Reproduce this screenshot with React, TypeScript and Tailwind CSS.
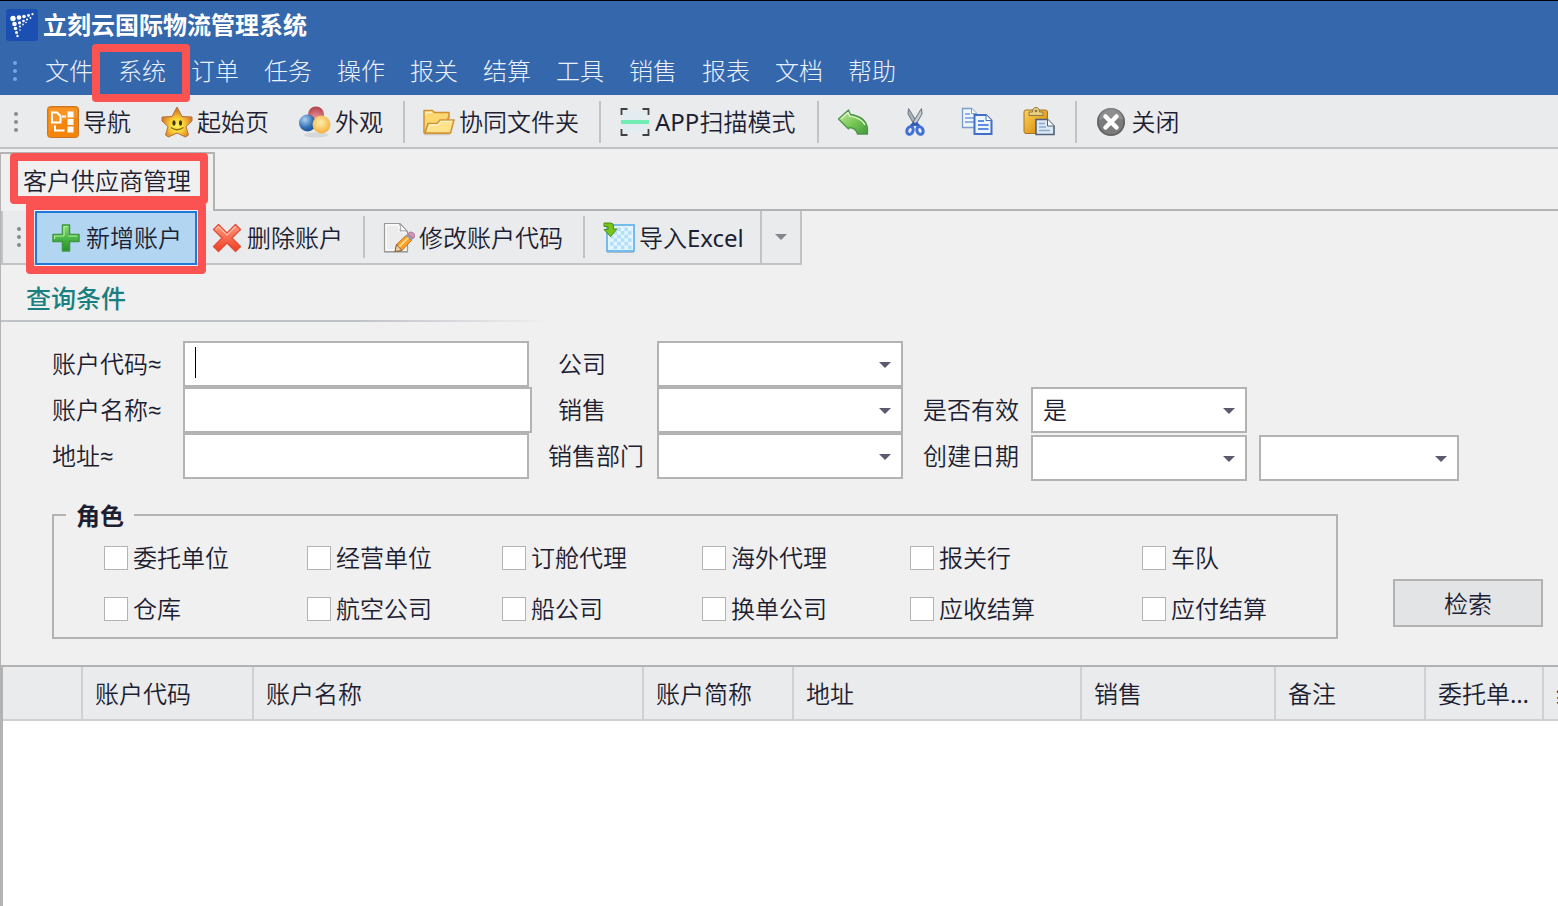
import type { ReactNode } from "react";

const menuItems = ["文件", "系统", "订单", "任务", "操作", "报关", "结算", "工具", "销售", "报表", "文档", "帮助"];

const roles = [
	"委托单位", "经营单位", "订舱代理", "海外代理", "报关行", "车队",
	"仓库", "航空公司", "船公司", "换单公司", "应收结算", "应付结算",
];

const columns = [
	{ label: "", width: "w-[79px]" },
	{ label: "账户代码", width: "w-[171px]" },
	{ label: "账户名称", width: "w-[390px]" },
	{ label: "账户简称", width: "w-[150px]" },
	{ label: "地址", width: "w-[288px]" },
	{ label: "销售", width: "w-[194px]" },
	{ label: "备注", width: "w-[150px]" },
	{ label: "委托单位", width: "w-[118px]" },
	{ label: "经营单位", width: "w-[118px]" },
];

function Logo() {
	return (
		<svg viewBox="0 0 32 32" className="h-8 w-8" fill="#fff">
			<rect width="32" height="32" rx="3" fill="#1c4fb2" />
			<circle cx="7" cy="9.500" r="2.700" />
			<circle cx="13" cy="8.500" r="2.300" />
			<circle cx="18" cy="7.500" r="1.800" />
			<circle cx="22.500" cy="6.500" r="1.400" />
			<circle cx="26.500" cy="5.200" r="1.100" />
			<circle cx="8.500" cy="15" r="2.300" />
			<circle cx="13.500" cy="13.800" r="1.600" />
			<circle cx="17.500" cy="12" r="1.300" />
			<circle cx="21" cy="10.500" r="1.100" />
			<circle cx="24.500" cy="9" r=".9" />
			<circle cx="9.500" cy="19.500" r="1.800" />
			<circle cx="14" cy="17.500" r="1.100" />
			<circle cx="17" cy="15.500" r=".9" />
			<circle cx="20" cy="13.500" r=".8" />
			<circle cx="10.500" cy="23.500" r="1.500" />
			<circle cx="14" cy="21" r=".8" />
			<circle cx="11.500" cy="27" r="1.200" />
		</svg>
	);
}

function NavIcon() {
	return (
		<svg viewBox="0 0 32 32" className="h-8 w-8">
			<rect x=".5" y=".5" width="31" height="31" rx="3" fill="#f5850a" stroke="#c9772a" />
			<path d="M2 26V4q0-2 2-2h24q2 0 2 2v8Q14 12 2 26z" fill="#fba94a" opacity=".4" />
			<g fill="none" stroke="#fff" strokeWidth="2">
				<path d="M5 6.500h5l3.500 3.500v6.500H5zM8 19.500v5h9.500M15 10.500h4" />
				<path d="M21.500 6.500h4v4h-4zM21.500 14h4v4h-4zM21.500 21.500h4v4h-4z" fill="#fff" />
			</g>
		</svg>
	);
}

function StarIcon() {
	return (
		<svg viewBox="0 0 32 32" className="h-8 w-8">
			<defs>
				<radialGradient id="star" cx=".5" cy=".62" r=".5">
					<stop offset="0" stopColor="#fff45c" />
					<stop offset=".45" stopColor="#fbd437" />
					<stop offset="1" stopColor="#d97f2b" />
				</radialGradient>
			</defs>
			<path d="M16 1l5 9.500L31 11v4l-6 5.500 2.500 8.500-3 2-8.500-4-8.500 4-3-2L7 20.500 1 15v-4l10-.5z" fill="url(#star)" stroke="#b5713a" strokeLinejoin="round" />
			<ellipse cx="13" cy="17" rx="1.600" ry="2.700" fill="#3a3212" />
			<ellipse cx="19.500" cy="17" rx="1.600" ry="2.700" fill="#3a3212" />
			<path d="M10 21.500q6 4.500 12.500 0" fill="none" stroke="#8c6a17" strokeWidth="1.300" />
		</svg>
	);
}

function SkinIcon() {
	return (
		<svg viewBox="0 0 32 32" className="h-8 w-8">
			<defs>
				<radialGradient id="red" cx=".5" cy=".8" r=".8">
					<stop offset="0" stopColor="#f3a1a1" />
					<stop offset="1" stopColor="#b0404a" />
				</radialGradient>
				<radialGradient id="blue" cx=".35" cy=".3" r=".8">
					<stop offset="0" stopColor="#aed1f2" />
					<stop offset=".6" stopColor="#336fb3" />
					<stop offset="1" stopColor="#194b8c" />
				</radialGradient>
				<radialGradient id="gold" cx=".45" cy=".4" r=".7">
					<stop offset="0" stopColor="#ffefad" />
					<stop offset="1" stopColor="#f2a52b" />
				</radialGradient>
			</defs>
			<ellipse cx="17" cy="29" rx="12" ry="2.500" fill="#d6d7d8" />
			<circle cx="17" cy="8.500" r="8" fill="url(#red)" />
			<circle cx="8.500" cy="17" r="8.500" fill="url(#blue)" />
			<circle cx="22.500" cy="18.500" r="9" fill="url(#gold)" />
		</svg>
	);
}

function FolderIcon() {
	return (
		<svg viewBox="0 0 32 32" className="h-8 w-8">
			<path d="M1 28.500h26" stroke="#cfcac0" strokeWidth="1.500" />
			<path d="M1 27V4.500h8.500l2 2H26V12h-1v15z" fill="#fbd671" stroke="#cf9135" strokeWidth="1.500" strokeLinejoin="round" />
			<path d="M2 27l3-9.500h9l3-3.500H31l-3.500 13z" fill="#fde28a" stroke="#cf9135" strokeWidth="1.500" strokeLinejoin="round" />
			<path d="M5 24l2-5h8l3-3.500h11M3 9V6.500h6" fill="none" stroke="#fff3c4" strokeWidth="1.300" />
		</svg>
	);
}

function ScanIcon() {
	return (
		<svg viewBox="0 0 32 32" className="h-8 w-8">
			<rect x="5" y="5" width="22" height="22" fill="#e0ecf3" opacity=".7" />
			<path d="M2.500 9V3h6M23.500 3h6v6M2.500 23V29h6M23.500 29h6v-6" fill="none" stroke="#3d4144" strokeWidth="1.800" />
			<path d="M2 16h28" stroke="#72edb6" strokeWidth="4" />
		</svg>
	);
}

function UndoIcon() {
	return (
		<svg viewBox="0 0 32 32" className="h-8 w-8">
			<defs>
				<linearGradient id="undo" x1="0" y1="0" x2="1" y2="1">
					<stop offset="0" stopColor="#c8ecaa" />
					<stop offset=".5" stopColor="#7cc957" />
					<stop offset="1" stopColor="#3e9b3a" />
				</linearGradient>
			</defs>
			<path d="M1.500 13L11.500 4l2 4.500q16 2.500 17 14.500v5h-10q-1.500-6-8-6.500L11.500 23z" fill="url(#undo)" stroke="#4d944c" strokeWidth="1.300" strokeLinejoin="round" />
			<path d="M4 13l7-6.500 1.500 3.500q12 2 15.500 9" fill="none" stroke="#e2f7cf" strokeWidth="1.200" />
		</svg>
	);
}

function CutIcon() {
	return (
		<svg viewBox="0 0 32 32" className="h-8 w-8">
			<path d="M9.500 2.500l9 14.500-2.500 3L9 8z" fill="#a9b2bd" stroke="#69737f" strokeWidth="1" />
			<path d="M22.500 2.500L13.500 17l2.500 3L23 8z" fill="#c4cbd3" stroke="#69737f" strokeWidth="1" />
			<path d="M15.800 17l-4 3.500M16.200 17l4 3.500" stroke="#315cba" strokeWidth="3.500" />
			<g fill="#e9ebec" stroke="#3f70d8" strokeWidth="3">
				<ellipse cx="11" cy="24.500" rx="3" ry="4" transform="rotate(25 11 24.500)" />
				<ellipse cx="21" cy="24.500" rx="3" ry="4" transform="rotate(-25 21 24.500)" />
			</g>
		</svg>
	);
}

function CopyIcon() {
	return (
		<svg viewBox="0 0 32 32" className="h-8 w-8">
			<path d="M1.500 2.500h9l5 5v14h-14z" fill="#edf5fe" stroke="#7d9dcb" strokeWidth="1.300" />
			<path d="M10.500 2.500v5h5" fill="#fff" stroke="#7d9dcb" />
			<path d="M4 8h5M4 12h9M4 16h9" stroke="#8db1e8" strokeWidth="1.800" />
			<path d="M13.500 9H25l5.500 5.500V28h-17z" fill="#edf5ff" stroke="#416dcb" strokeWidth="2" />
			<path d="M25 9v5.500h5.500" fill="#fff" stroke="#416dcb" />
			<path d="M17 15h6M17 19h10.500M17 23h10.500" stroke="#5d8ee4" strokeWidth="1.800" />
		</svg>
	);
}

function PasteIcon() {
	return (
		<svg viewBox="0 0 32 32" className="h-8 w-8">
			<defs>
				<linearGradient id="board" x1="0" y1="0" x2="1" y2="1">
					<stop offset="0" stopColor="#ffd45a" />
					<stop offset="1" stopColor="#d07f00" />
				</linearGradient>
			</defs>
			<rect x="1" y="4" width="23.500" height="23.500" rx="2" fill="url(#board)" stroke="#a57229" />
			<path d="M6 9.500V6h3.500q0-4.500 3.500-4.500T16.500 6H20v3.500z" fill="#e9cf7c" stroke="#8c7a47" />
			<circle cx="13" cy="5" r="1.300" fill="#8c7a47" />
			<path d="M13 13.500h11.500l6.500 6.500v8.500H13z" fill="#dbe8f6" stroke="#526177" strokeWidth="1.600" />
			<path d="M24.500 13.500V20H31" fill="#fff" stroke="#526177" />
			<path d="M16 17.500h6M16 21h7M16 24.500h11" stroke="#8ca8cb" strokeWidth="1.500" />
		</svg>
	);
}

function CloseIcon() {
	return (
		<svg viewBox="0 0 32 32" className="h-8 w-8">
			<circle cx="16" cy="16" r="14" fill="#7b7b7b" />
			<circle cx="16" cy="16" r="13" fill="none" stroke="#626262" strokeWidth="1.500" />
			<path d="M4 14a12 12 0 0 1 24 0q-12-5-24 0z" fill="#9b9b9b" opacity=".6" />
			<path d="M10.500 10.500l11 11M21.500 10.500l-11 11" stroke="#fff" strokeWidth="4.500" strokeLinecap="round" />
		</svg>
	);
}

function AddIcon() {
	return (
		<svg viewBox="0 0 32 32" className="h-8 w-8">
			<defs>
				<linearGradient id="add" x1="0" y1="0" x2="0" y2="1">
					<stop offset="0" stopColor="#8ddc7c" />
					<stop offset=".5" stopColor="#4cb748" />
					<stop offset="1" stopColor="#249228" />
				</linearGradient>
			</defs>
			<path d="M12.500 3h7v9.500H29v7h-9.500V29h-7v-9.500H3v-7h9.500z" fill="url(#add)" stroke="#3c9940" strokeWidth="1.500" strokeLinejoin="round" />
			<path d="M14 14V4.500h4M4.500 17v-3H14M18.500 14h9" fill="none" stroke="#aff09d" strokeWidth="1.200" />
		</svg>
	);
}

function DeleteIcon() {
	return (
		<svg viewBox="0 0 32 32" className="h-8 w-8">
			<defs>
				<linearGradient id="del" x1="0" y1="0" x2="0" y2="1">
					<stop offset="0" stopColor="#ff9a7e" />
					<stop offset="1" stopColor="#ee3e22" />
				</linearGradient>
			</defs>
			<path d="M7.500 2.500l8.500 8.500 8.500-8.500 5 5L21 16l8.500 8.500-5 5L16 21l-8.500 8.500-5-5L11 16 2.500 7.500z" fill="url(#del)" stroke="#e04c38" strokeWidth="1.300" strokeLinejoin="round" />
			<path d="M4.500 7.500l3-3 8.500 8.500 8.500-8.500" fill="none" stroke="#ffc0ab" strokeWidth="1.200" />
		</svg>
	);
}

function EditIcon() {
	return (
		<svg viewBox="0 0 32 32" className="h-8 w-8">
			<path d="M1.500 1.500H17l7.500 8V29.500h-23z" fill="#f8f8f8" stroke="#9a9a9a" strokeWidth="1.200" />
			<path d="M4 4h11v6q5 0 7 2v15H4z" fill="#ececec" />
			<path d="M16.500 1.500q2 4 .5 7.500 4-1 7.500.5z" fill="#fff" stroke="#9a9a9a" />
			<path d="M1 30.500h24" stroke="#bcbcbc" />
			<path d="M12 29.500l1.500-7L23 13.500l5.500 5-9.500 10z" fill="#f7a026" stroke="#bf7628" />
			<path d="M16 25l9.500-9.500" stroke="#ffd489" strokeWidth="1.800" />
			<path d="M12 29.500l1.500-7 5.500 6z" fill="#e8cfa5" stroke="#75512c" strokeWidth=".8" />
			<path d="M23 13.500l2-2 5.500 5-2 2z" fill="#8f9bb0" />
			<path d="M25 11.500q2.500-3 5.500-.5t0 5.500z" fill="#d991b2" stroke="#af6f95" strokeWidth=".8" />
		</svg>
	);
}

function ImportIcon() {
	const cells = [0, 1, 2, 3, 4, 5].flatMap((r) => [0, 1, 2, 3, 4, 5].filter((c) => (r + c) % 2 === 0).map((c) => [r, c]));
	return (
		<svg viewBox="0 0 32 32" className="h-8 w-8">
			<rect x="4" y="3" width="27" height="26" fill="#e5f5ff" stroke="#69b5ed" strokeWidth="1.800" />
			{cells.map(([r, c]) => (
				<rect key={`${r}-${c}`} x={7 + c * 3.6} y={5.5 + r * 3.6} width="3.600" height="3.600" fill="#b0dffa" />
			))}
			<path d="M4 30.500h27" stroke="#a9bdca" />
			<path d="M1 1h6.500q3 0 3 3v3h3.500L7.500 14.500 1 7.500h4V4.500H1z" fill="#78c51c" stroke="#4d8a16" strokeLinejoin="round" />
		</svg>
	);
}

function Highlight({ className }: { className: string }) {
	return <span className={`pointer-events-none absolute z-10 rounded-sm border-8 border-[#fb5252] ${className}`} />;
}

function Grip({ className }: { className: string }) {
	return (
		<span className={`flex shrink-0 flex-col gap-1 ${className}`}>
			<i className="h-1 w-1 rounded-full bg-current" />
			<i className="h-1 w-1 rounded-full bg-current" />
			<i className="h-1 w-1 rounded-full bg-current" />
		</span>
	);
}

function Divider({ className = "" }: { className?: string }) {
	return <span className={`h-[42px] w-0.5 shrink-0 bg-[#c2c3c5] ${className}`} />;
}

function ToolButton({ icon, label, className = "" }: { icon: ReactNode; label: string; className?: string }) {
	return (
		<button type="button" className={`flex shrink-0 items-center gap-1 whitespace-nowrap ${className}`}>
			{icon}
			{label}
		</button>
	);
}

function IconButton({ icon, label, className = "" }: { icon: ReactNode; label: string; className?: string }) {
	return (
		<button type="button" aria-label={label} className={`shrink-0 ${className}`}>
			{icon}
		</button>
	);
}

function Arrow({ className }: { className: string }) {
	return (
		<svg viewBox="0 0 12 6" className={`h-1.5 w-3 ${className}`} fill="currentColor">
			<path d="M0 0h12L6 6z" />
		</svg>
	);
}

const boxClass = "h-[46px] w-full min-w-0 appearance-none rounded-none border-2 border-[#b3b3b3] bg-white px-2.5 outline-none";

function Combo({ id, label, options = [""] }: { id: string; label?: string; options?: string[] }) {
	return (
		<div className="relative min-w-0 flex-1">
			<select id={id} aria-label={label} className={boxClass}>
				{options.map((option) => (
					<option key={option}>{option}</option>
				))}
			</select>
			<Arrow className="pointer-events-none absolute top-[21px] right-3 text-[#5c5a6e]" />
		</div>
	);
}

export default function App() {
	return (
		<div className="flex min-h-screen flex-col overflow-hidden bg-[#f0f0f0] font-['Noto_Sans','Open_Sans','Noto_Sans_CJK_SC_DemiLight','Noto_Sans_CJK_SC',sans-serif] text-[24px] leading-8 text-[#1e1e32]">
			<header className="border-t border-black bg-[#3567ad] font-['Noto_Sans','Noto_Sans_CJK_SC',sans-serif]">
				<div className="flex h-[47px] items-center gap-[5px] px-1.5">
					<Logo />
					<h1 className="font-bold text-white">立刻云国际物流管理系统</h1>
				</div>
				<nav className="flex h-[47px] items-center pb-0.5 pl-[13px] font-light text-[#e9f1fc]">
					<Grip className="mr-7 text-[#70a6eb]" />
					<div className="flex gap-[25px]">
						{menuItems.map((item) => (
							<a key={item} href="#" className="relative whitespace-nowrap">
								{item}
								{item === "系统" && <Highlight className="-top-[11px] -right-6 -bottom-[15px] -left-[26px]" />}
							</a>
						))}
					</div>
				</nav>
			</header>

			<div className="flex h-[54px] items-center border-b-2 border-[#c0c2c4] bg-[#e9ebec] pt-0.5 pl-3.5">
				<Grip className="text-[#898995]" />
				<ToolButton icon={<NavIcon />} label="导航" className="ml-[29px]" />
				<ToolButton icon={<StarIcon />} label="起始页" className="ml-[30px]" />
				<ToolButton icon={<SkinIcon />} label="外观" className="ml-[30px]" />
				<Divider className="ml-5" />
				<ToolButton icon={<FolderIcon />} label="协同文件夹" className="ml-[18px]" />
				<Divider className="ml-5" />
				<ToolButton icon={<ScanIcon />} label="APP扫描模式" className="ml-[18px]" />
				<Divider className="ml-[22px]" />
				<IconButton icon={<UndoIcon />} label="撤销" className="ml-[18px]" />
				<IconButton icon={<CutIcon />} label="剪切" className="ml-[30px]" />
				<IconButton icon={<CopyIcon />} label="复制" className="ml-[30px]" />
				<IconButton icon={<PasteIcon />} label="粘贴" className="ml-[30px]" />
				<Divider className="ml-5" />
				<ToolButton icon={<CloseIcon />} label="关闭" className="ml-[18px]" />
			</div>

			<div className="flex h-[62px] pt-[3px]">
				<button type="button" className="relative w-[215px] shrink-0 border-t-2 border-r-2 border-l border-[#b3b3b3] pb-1 whitespace-nowrap">
					客户供应商管理
					<Highlight className="-top-px right-[5px] bottom-[7px] left-[9px]" />
				</button>
				<div className="flex-1 border-b-2 border-[#b3b3b3]" />
			</div>

			<main className="border-l border-[#b3b3b3]">
				<div className="flex h-[54px] w-[801px] items-stretch border-r-2 border-b-2 border-l-2 border-[#c2c3c5] bg-[#e9ebec]">
					<Grip className="ml-3.5 self-center text-[#898995]" />
					<div className="relative -mb-0.5 ml-3.5 flex border-2 border-[#2278d8] bg-[#b2d5f1]">
						<ToolButton icon={<AddIcon />} label="新增账户" className="px-[13px]" />
						<Highlight className="-inset-x-[11px] -top-[11px] -bottom-[11px]" />
					</div>
					<ToolButton icon={<DeleteIcon />} label="删除账户" className="ml-3.5 pt-0.5" />
					<Divider className="ml-5 self-center" />
					<ToolButton icon={<EditIcon />} label="修改账户代码" className="ml-[18px] pt-0.5" />
					<Divider className="ml-5 self-center" />
					<ToolButton icon={<ImportIcon />} label="导入Excel" className="ml-[18px] pt-0.5" />
					<button type="button" aria-label="更多" className="ml-auto flex w-10 items-center justify-center border-l-2 border-[#c2c3c5]">
						<Arrow className="text-[#85858f]" />
					</button>
				</div>

				<h2 className="flex h-[55px] items-center pt-2 pl-[25px] font-['Noto_Sans_CJK_SC',sans-serif] text-[25px] font-medium text-[#1a7f80]">查询条件</h2>
				<div className="h-0.5 w-[550px] bg-linear-to-r from-[#c0c2ca] from-65% to-transparent" />

				<form onSubmit={(e) => e.preventDefault()}>
					<div className="grid grid-cols-[480fr_355fr_540fr] gap-4 pt-[19px] pr-[99px] pl-[51px]">
						<div>
							<div className="relative mr-[3px] flex items-center">
								<label htmlFor="code" className="w-[131px] shrink-0">账户代码≈</label>
								<input id="code" type="text" className={boxClass} />
								<span className="pointer-events-none absolute top-1.5 left-[143px] h-[31px] w-px bg-black" />
							</div>
							<div className="flex items-center">
								<label htmlFor="name" className="w-[131px] shrink-0">账户名称≈</label>
								<input id="name" type="text" className={boxClass} />
							</div>
							<div className="mr-[3px] flex items-center">
								<label htmlFor="address" className="w-[131px] shrink-0">地址≈</label>
								<input id="address" type="text" className={boxClass} />
							</div>
						</div>
						<div>
							<div className="flex items-center">
								<label htmlFor="company" className="w-[109px] shrink-0 pl-2.5">公司</label>
								<Combo id="company" />
							</div>
							<div className="flex items-center">
								<label htmlFor="sales" className="w-[109px] shrink-0 pl-2.5">销售</label>
								<Combo id="sales" />
							</div>
							<div className="flex items-center">
								<label htmlFor="department" className="w-[109px] shrink-0">销售部门</label>
								<Combo id="department" />
							</div>
						</div>
						<div className="flex flex-col gap-0.5 pt-[46px] pl-1">
							<div className="flex items-center">
								<label htmlFor="valid" className="w-[108px] shrink-0">是否有效</label>
								<div className="grid flex-1 grid-cols-[216fr_200fr] gap-3">
									<Combo id="valid" options={["是", "否"]} />
								</div>
							</div>
							<div className="flex items-center">
								<label htmlFor="from" className="w-[108px] shrink-0 pb-1">创建日期</label>
								<div className="grid flex-1 grid-cols-[216fr_200fr] gap-3">
									<Combo id="from" />
									<Combo id="to" label="创建日期至" />
								</div>
							</div>
						</div>
					</div>

					<div className="flex items-end gap-[55px] pt-[18px] pr-[15px] pb-[26px] pl-[51px]">
						<fieldset className="min-w-0 flex-1 border-2 border-[#b3b3b3] pb-3 pl-[50px]">
							<legend className="-ml-[38px] px-2.5 font-['Noto_Sans_CJK_SC',sans-serif] font-bold">角色</legend>
							<div className="grid grid-cols-[203fr_195fr_200fr_208fr_232fr_194fr] gap-y-[19px] pt-[11px]">
								{roles.map((role) => (
									<label key={role} className="flex items-center gap-[5px] whitespace-nowrap">
										<input type="checkbox" className="h-6 w-6 shrink-0 appearance-none border border-[#b3b3b3] bg-white checked:bg-[#2278d8]" />
										{role}
									</label>
								))}
							</div>
						</fieldset>
						<button type="submit" className="mb-3 h-12 w-[150px] border-2 border-[#b3b3b3] bg-[#e2e4e6] pt-0.5">检索</button>
					</div>
				</form>
			</main>

			<section className="flex-1 overflow-hidden border-t-2 border-l-[3px] border-[#b3b3b3] bg-white">
				<table className="w-full min-w-[1658px] table-fixed border-collapse">
					<thead>
						<tr className="h-[53px] bg-[#e9ebec]">
							{columns.map((column) => (
								<th key={column.label} className={`truncate border-r-2 border-b-2 border-[#cfd0d1] px-3 pt-0.5 text-left font-normal ${column.width}`}>
									{column.label}
								</th>
							))}
						</tr>
					</thead>
				</table>
			</section>
		</div>
	);
}
